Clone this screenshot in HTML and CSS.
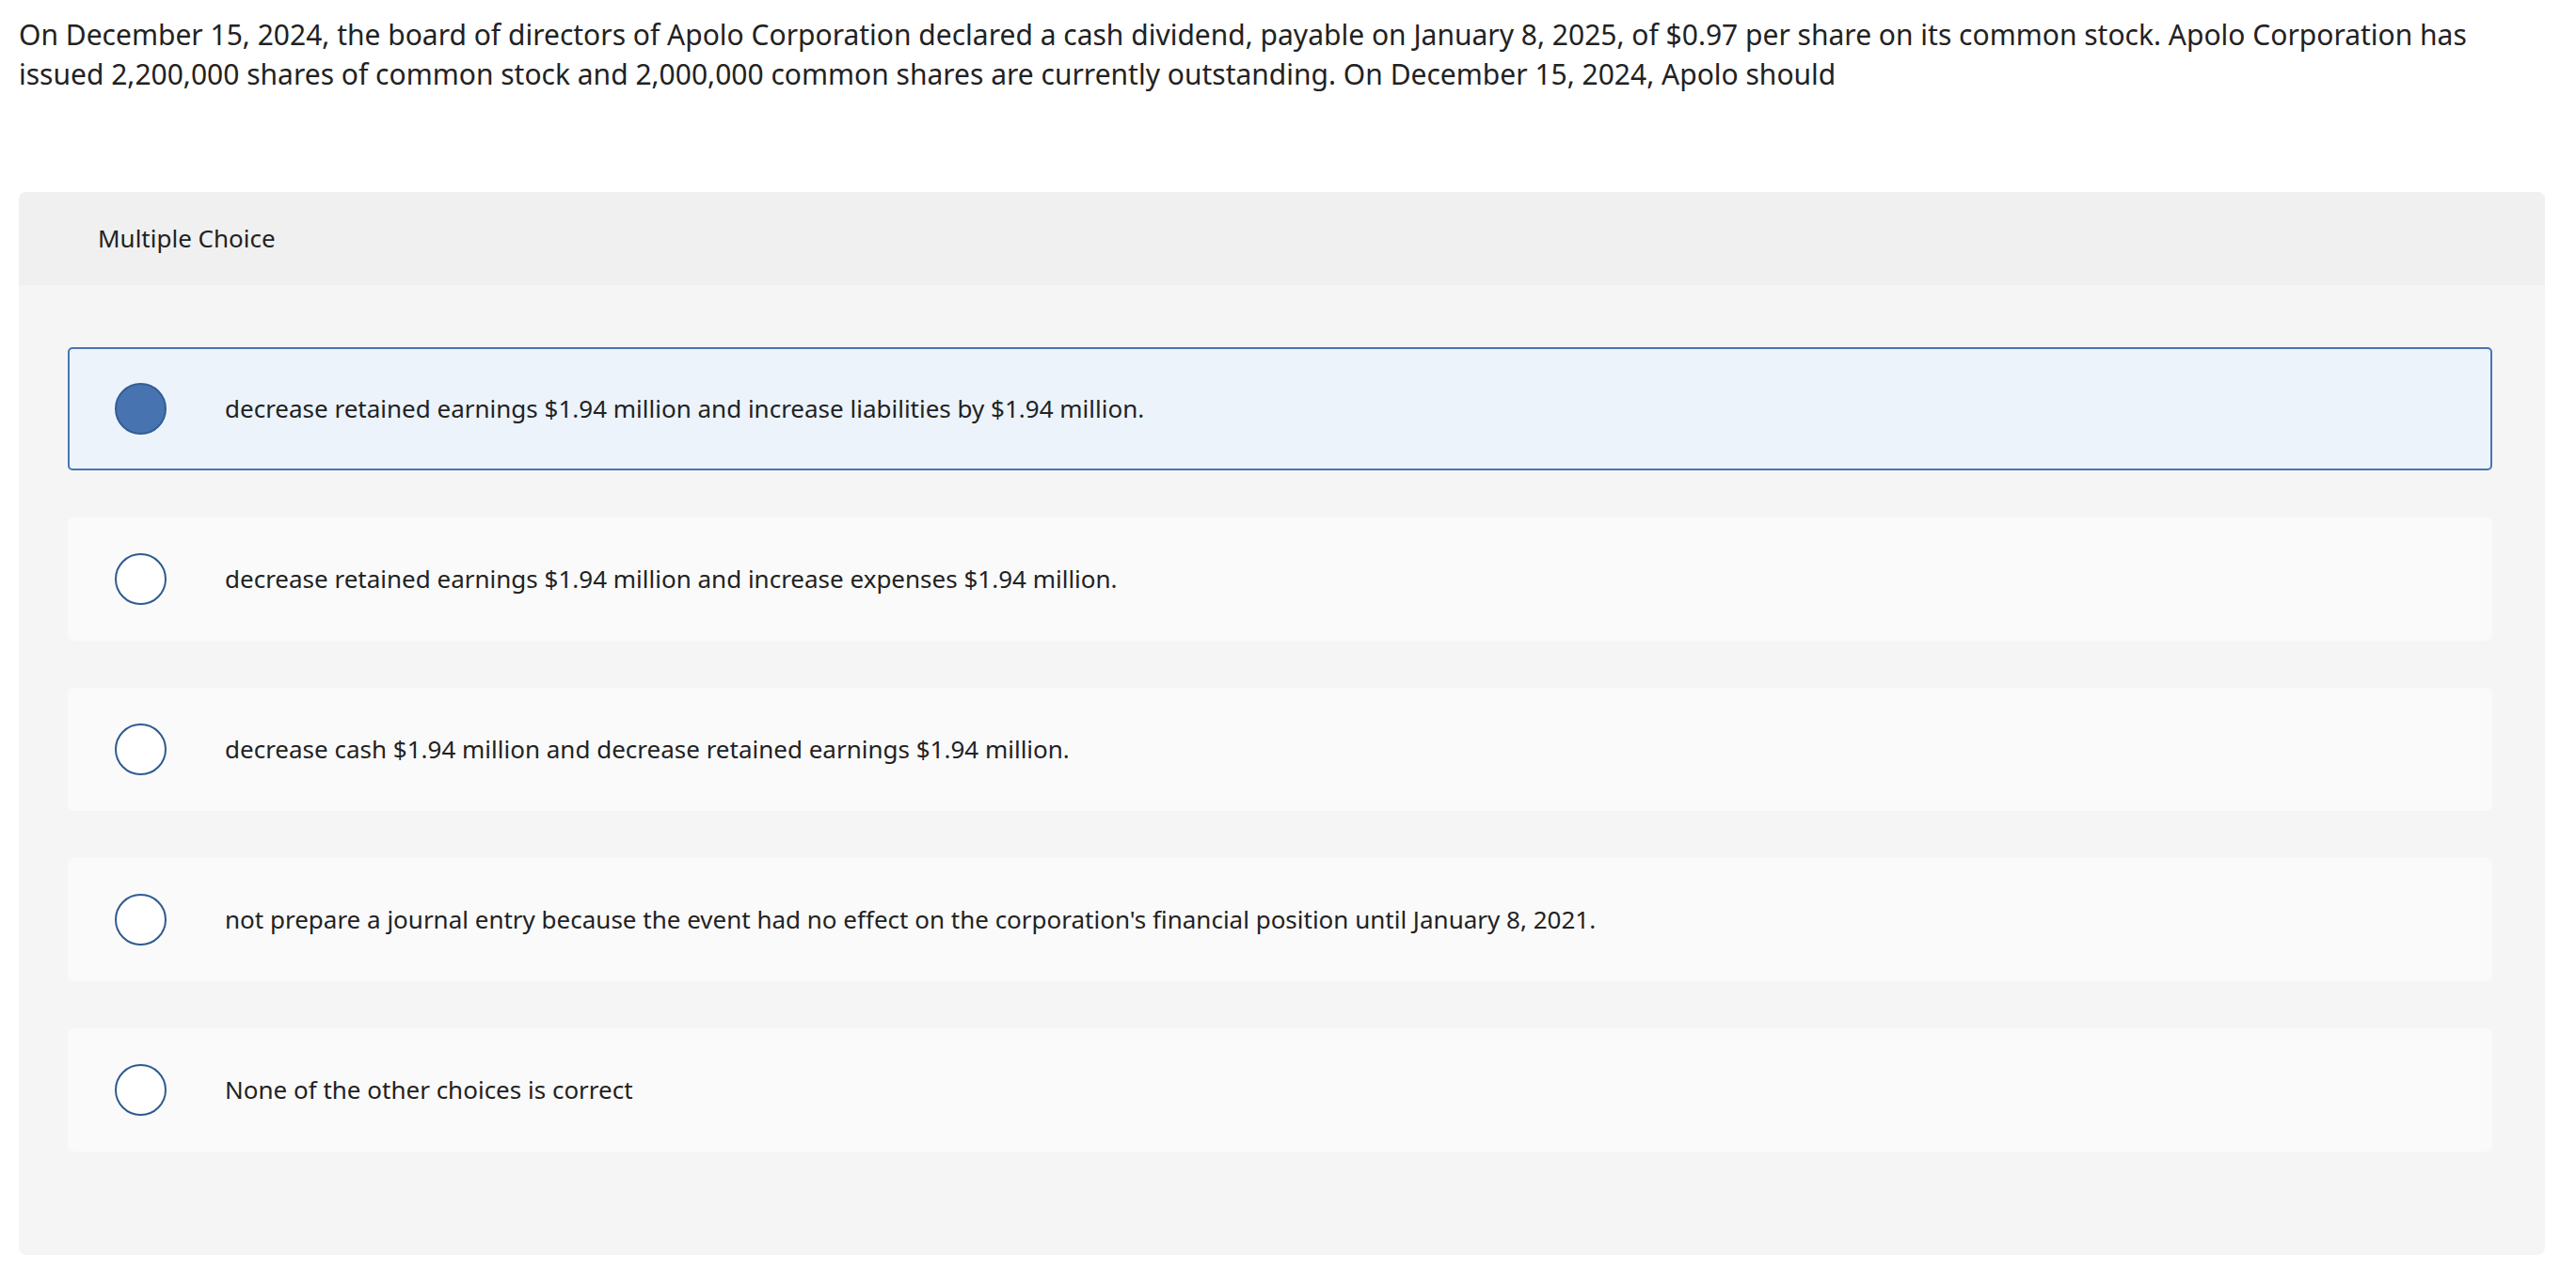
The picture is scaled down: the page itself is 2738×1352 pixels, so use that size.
FILE: index.html
```html
<!DOCTYPE html>
<html lang="en">
<head>
<meta charset="utf-8">
<title>Multiple Choice</title>
<link rel="stylesheet" href="styles.css">
</head>
<body>
<main class="page">
  <p class="question">On December 15, 2024, the board of directors of Apolo Corporation declared a cash dividend, payable on January 8, 2025, of $0.97 per share on its common stock. Apolo Corporation has issued 2,200,000 shares of common stock and 2,000,000 common shares are currently outstanding. On December 15, 2024, Apolo should</p>
  <section class="mc">
    <header class="mc-head">Multiple Choice</header>
    <div class="mc-body">
      <div class="option selected">
        <span class="radio"></span>
        <span class="option-text">decrease retained earnings $1.94 million and increase liabilities by $1.94 million.</span>
      </div>
      <div class="option">
        <span class="radio"></span>
        <span class="option-text">decrease retained earnings $1.94 million and increase expenses $1.94 million.</span>
      </div>
      <div class="option">
        <span class="radio"></span>
        <span class="option-text">decrease cash $1.94 million and decrease retained earnings $1.94 million.</span>
      </div>
      <div class="option">
        <span class="radio"></span>
        <span class="option-text">not prepare a journal entry because the event had no effect on the corporation's financial position until January 8, 2021.</span>
      </div>
      <div class="option">
        <span class="radio"></span>
        <span class="option-text">None of the other choices is correct</span>
      </div>
    </div>
  </section>
</main>
</body>
</html>
```
FILE: styles.css
```css
* { box-sizing: border-box; }

html, body {
  margin: 0;
  padding: 0;
  background: #ffffff;
}

body {
  font-family: "Noto Sans", "Open Sans", sans-serif;
  color: #222222;
}

.page {
  padding: 16px 33px 19px 20px;
}

.question {
  margin: 0;
  font-size: 30px;
  line-height: 42.4px;
  padding-right: 10px;
}

.mc {
  margin-top: 103px;
  border-radius: 8px;
  overflow: hidden;
  background: #f5f5f5;
}

.mc-head {
  background: #f0f0f0;
  font-size: 26px;
  line-height: 36px;
  padding: 31px 84px 32px;
}

.mc-body {
  display: flex;
  flex-direction: column;
  gap: 50px;
  padding: 66px 56px 110px 52px;
}

.option {
  display: flex;
  align-items: center;
  height: 131px;
  padding-left: 50px;
  background: #fafafa;
  border-radius: 6px;
  font-size: 26px;
  line-height: 36px;
}

.option.selected {
  background: #ecf3fb;
  border: 2px solid #4a74b4;
  border-radius: 5px;
  padding-left: 48px;
}

.radio {
  flex: none;
  width: 55px;
  height: 55px;
  border-radius: 50%;
  border: 2px solid #2e5a90;
  background: #ffffff;
  margin-right: 62px;
}

.option.selected .radio {
  background: #4773b1;
  border-color: #335e95;
}

.option-text {
  white-space: nowrap;
}
```
